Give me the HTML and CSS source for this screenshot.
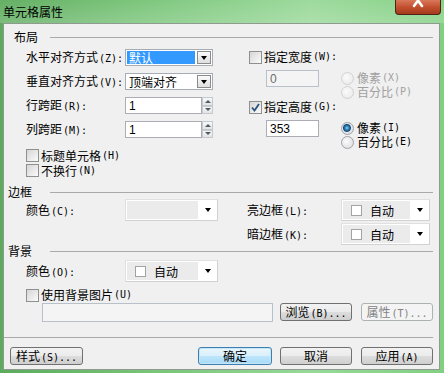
FILE: index.html
```html
<!DOCTYPE html>
<html>
<head>
    <title>单元格属性</title>
    <link rel="stylesheet" href="styles.css">
</head>
<body>
    <div class="window">
        <div class="titlebar">
            <span class="title">单元格属性</span>
            <div class="close-btn">
                <svg width="14" height="8" viewBox="0 0 14 8"><path d="M3 -5 L11 6 M11 -5 L3 6" stroke="#fff" stroke-width="2.6" stroke-linecap="round"/></svg>
            </div>
        </div>

        <div class="dialog">
            <!-- 布局 -->
            <div class="group-head"><span class="group-title indent">布局</span><div class="rule"></div></div>
            <div class="layout">
                <div class="layout-left">
                    <div class="form-grid">
                        <span class="lbl">水平对齐方式<span class="key">(Z):</span></span>
                        <div class="select"><span class="sel-text selected">默认</span><span class="drop-btn"></span></div>

                        <span class="lbl">垂直对齐方式<span class="key">(V):</span></span>
                        <div class="select"><span class="sel-text">顶端对齐</span><span class="drop-btn"></span></div>

                        <span class="lbl">行跨距<span class="key">(R):</span></span>
                        <div class="spin"><input class="field spin-field" type="text" value="1"><span class="spinner"><span class="spin-up"></span><span class="spin-down"></span></span></div>

                        <span class="lbl">列跨距<span class="key">(M):</span></span>
                        <div class="spin"><input class="field spin-field" type="text" value="1"><span class="spinner"><span class="spin-up"></span><span class="spin-down"></span></span></div>
                    </div>
                    <div class="check-list">
                        <div class="check-row"><span class="check"></span>标题单元格<span class="key">(H)</span></div>
                        <div class="check-row"><span class="check"></span>不换行<span class="key">(N)</span></div>
                    </div>
                </div>

                <div class="layout-right">
                    <div class="check-row"><span class="check"></span>指定宽度<span class="key">(W):</span></div>
                    <div class="size-row">
                        <input class="field size-field" type="text" value="0" disabled>
                        <div class="radio-list">
                            <div class="radio-row disabled"><span class="radio"></span>像素<span class="key">(X)</span></div>
                            <div class="radio-row disabled"><span class="radio"></span>百分比<span class="key">(P)</span></div>
                        </div>
                    </div>
                    <div class="check-row"><span class="check checked"><svg width="9" height="9" viewBox="0 0 9 9"><path d="M1 4.5 L3.5 7.5 L8 1" fill="none" stroke="#2c4f7c" stroke-width="1.8"/></svg></span>指定高度<span class="key">(G):</span></div>
                    <div class="size-row">
                        <input class="field size-field" type="text" value="353">
                        <div class="radio-list">
                            <div class="radio-row"><span class="radio on"></span>像素<span class="key">(I)</span></div>
                            <div class="radio-row"><span class="radio"></span>百分比<span class="key">(E)</span></div>
                        </div>
                    </div>
                </div>
            </div>

            <!-- 边框 -->
            <div class="group-head border-head"><span class="group-title">边框</span><div class="rule"></div></div>
            <div class="border-grid">
                <span class="lbl">颜色<span class="key">(C):</span></span>
                <div class="color-select"><span class="swatch-area"></span><span class="arrow"></span></div>
                <span class="lbl lbl-right">亮边框<span class="key">(L):</span></span>
                <div class="color-select"><span class="swatch-area"><span class="swatch"></span>自动</span><span class="arrow"></span></div>

                <span></span><span></span>
                <span class="lbl lbl-right">暗边框<span class="key">(K):</span></span>
                <div class="color-select"><span class="swatch-area"><span class="swatch"></span>自动</span><span class="arrow"></span></div>
            </div>

            <!-- 背景 -->
            <div class="group-head bg-head"><span class="group-title">背景</span><div class="rule"></div></div>
            <div class="bg-grid">
                <span class="lbl">颜色<span class="key">(O):</span></span>
                <div class="color-select"><span class="swatch-area"><span class="swatch"></span>自动</span><span class="arrow"></span></div>
            </div>
            <div class="check-row bg-check"><span class="check"></span>使用背景图片<span class="key">(U)</span></div>
            <div class="file-row">
                <input class="field file-field" type="text" value="" disabled>
                <button class="btn browse-btn">浏览<span class="key">(B)...</span></button>
                <button class="btn prop-btn" disabled>属性<span class="key">(T)...</span></button>
            </div>

            <div class="sep"></div>

            <div class="bottom-row">
                <button class="btn style-btn">样式<span class="key">(S)...</span></button>
                <button class="btn default ok-btn">确定</button>
                <button class="btn cancel-btn">取消</button>
                <button class="btn apply-btn">应用<span class="key">(A)</span></button>
            </div>
        </div>
    </div>
</body>
</html>
```

FILE: styles.css
```css
body {
    margin: 0;
    font-family: "Noto Sans CJK SC", "Liberation Sans", sans-serif;
    font-size: 12px;
    color: #000;
}

.window {
    width: 444px;
    height: 373px;
    overflow: hidden;
    background: linear-gradient(to right, #5cab5c 0%, #79c579 35%, #98d898 70%, #82cf82 100%);
}

.titlebar {
    height: 23px;
    display: flex;
    align-items: flex-start;
    padding-left: 3px;
    background: linear-gradient(to bottom, rgba(255, 255, 255, 0.05), rgba(255, 255, 255, 0.2));
}

.title {
    line-height: 23px;
}

.close-btn {
    margin-left: auto;
    margin-right: 3px;
    width: 46px;
    height: 15px;
    box-sizing: border-box;
    border: 1px solid #4e2214;
    border-top: none;
    border-radius: 0 0 4px 4px;
    background: linear-gradient(to bottom, #d9785a 0%, #c2502f 50%, #a5391c 100%);
    display: flex;
    justify-content: center;
    align-items: flex-start;
}

.dialog {
    margin: 0 4px 0 3px;
    height: 347px;
    box-sizing: border-box;
    border: 1px solid #8f9a90;
    background-color: #f0f0f0;
    padding: 6px 6px 0 4px;
}

/* group headings */
.group-head {
    display: grid;
    grid-template-columns: 42px 1fr;
    align-items: center;
    height: 14px;
    line-height: 14px;
}

.group-title.indent {
    padding-left: 6px;
}

.rule {
    border-top: 1px solid #a9a9a9;
}

.border-head {
    margin-top: 7px;
}

.bg-head {
    margin-top: -1px;
}

.key {
    font-family: "DejaVu Sans Mono", monospace;
    font-size: 10px;
    margin-left: 1px;
}

/* 布局 */
.layout {
    display: flex;
    margin-top: 5px;
}

.layout-left {
    padding-left: 18px;
}

.form-grid {
    display: grid;
    grid-template-columns: 99px 88px;
    grid-auto-rows: 17px;
    row-gap: 7px;
    align-items: center;
}

.lbl {
    line-height: 17px;
    white-space: nowrap;
}

.select {
    height: 17px;
    box-sizing: border-box;
    border: 1px solid #a5acb5;
    background: #fff;
    display: flex;
    padding: 1px;
}

.sel-text {
    flex: 1;
    line-height: 13px;
    padding-left: 2px;
}

.sel-text.selected {
    background-color: #3399ff;
    color: #fff;
}

.drop-btn {
    width: 14px;
    margin-left: 2px;
    box-sizing: border-box;
    border: 1px solid #8b8b8b;
    background: linear-gradient(to bottom, #fbfbfb, #dedede);
    display: flex;
    justify-content: center;
    align-items: center;
}

.drop-btn::after {
    content: "";
    border-left: 3.5px solid transparent;
    border-right: 3.5px solid transparent;
    border-top: 4px solid #000;
}

.field {
    box-sizing: border-box;
    margin: 0;
    height: 17px;
    border: 1px solid #abadb3;
    background: #fff;
    padding: 0 3px;
    font-family: "Liberation Sans", sans-serif;
    font-size: 12px;
    color: #000;
}

.field:disabled {
    background: #f4f4f4;
    border-color: #b8c0ca;
    color: #6d6d6d;
}

.spin {
    display: flex;
    height: 17px;
}

.spin-field {
    width: 77px;
}

.spinner {
    width: 11px;
    display: flex;
    flex-direction: column;
}

.spin-up,
.spin-down {
    flex: 1;
    box-sizing: border-box;
    border: 1px solid #c5c9cf;
    background: linear-gradient(to bottom, #f8f8f8, #e3e3e3);
    display: flex;
    justify-content: center;
    align-items: center;
}

.spin-up::after {
    content: "";
    border-left: 3px solid transparent;
    border-right: 3px solid transparent;
    border-bottom: 3px solid #4e5a68;
}

.spin-down::after {
    content: "";
    border-left: 3px solid transparent;
    border-right: 3px solid transparent;
    border-top: 3px solid #4e5a68;
}

.check-list {
    margin-top: 10px;
}

.check-list .check-row {
    height: 15px;
    line-height: 15px;
}

.check-row {
    display: flex;
    align-items: center;
    height: 14px;
    line-height: 14px;
    white-space: nowrap;
}

.check {
    width: 13px;
    height: 13px;
    box-sizing: border-box;
    border: 1px solid #8e8f8f;
    background: linear-gradient(135deg, #d6d6d6, #fafafa);
    margin-right: 2px;
    display: flex;
    justify-content: center;
    align-items: center;
}

.layout-right {
    margin-left: 36px;
}

.layout-right .check-row {
    margin-top: 1px;
}

.size-row {
    display: flex;
    margin-top: 6px;
}

.size-field {
    margin-left: 17px;
    width: 53px;
}

.radio-list {
    margin-left: 22px;
    padding-top: 1px;
}

.radio-row {
    display: flex;
    align-items: center;
    height: 14px;
    line-height: 14px;
    white-space: nowrap;
}

.radio-row.disabled {
    color: #a0a0a0;
}

.radio {
    width: 13px;
    height: 13px;
    box-sizing: border-box;
    border-radius: 50%;
    border: 1px solid #9ea3a8;
    background: radial-gradient(circle at 40% 40%, #fbfbfb, #d9d9d9);
    margin-right: 3px;
}

.radio-row.disabled .radio {
    border-color: #cfd2d4;
    background: radial-gradient(circle at 40% 40%, #fbfbfb, #e6e6e6);
}

.radio.on {
    background: radial-gradient(circle at 45% 45%, #8fd0f0 0, #2a7fb6 2px, #164d7c 3.5px, #e8e8e8 4.5px, #d4d4d4 100%);
}

/* 边框 / 背景 */
.border-grid,
.bg-grid {
    display: grid;
    padding-left: 18px;
    grid-auto-rows: 22px;
    row-gap: 2px;
    align-items: center;
}

.border-grid {
    grid-template-columns: 99px 93px 123px 89px;
}

.bg-grid {
    grid-template-columns: 99px 93px;
    margin-top: 2px;
}

.lbl-right {
    padding-left: 29px;
}

.color-select {
    height: 22px;
    box-sizing: border-box;
    border: 1px solid #e0e0e0;
    border-right-color: #d2d2d2;
    border-bottom-color: #d2d2d2;
    background: #fff;
    padding: 1px 0 1px 1px;
    display: flex;
}

.swatch-area {
    flex: 1;
    background-color: #ebebeb;
    display: flex;
    align-items: center;
    padding-left: 8px;
    white-space: nowrap;
}

.swatch {
    width: 11px;
    height: 11px;
    box-sizing: border-box;
    border: 1px solid #a3a3a3;
    background: #fff;
    margin-right: 8px;
}

.arrow {
    width: 19px;
    display: flex;
    justify-content: center;
    align-items: center;
}

.arrow::after {
    content: "";
    border-left: 3.5px solid transparent;
    border-right: 3.5px solid transparent;
    border-top: 4px solid #000;
}

.bg-check {
    margin-top: 6px;
    padding-left: 18px;
}

.file-row {
    display: flex;
    margin-top: 1px;
    padding-left: 34px;
}

.file-field {
    width: 231px;
    height: 19px;
}

.btn {
    height: 18px;
    box-sizing: border-box;
    border: 1px solid #707070;
    border-radius: 3px;
    background: linear-gradient(to bottom, #f2f2f2 0%, #ebebeb 50%, #dddddd 51%, #cfcfcf 100%);
    font-family: "Noto Sans CJK SC", "Liberation Sans", sans-serif;
    font-size: 12px;
    line-height: 16px;
    padding: 0;
    color: #000;
    white-space: nowrap;
}

.btn:disabled {
    border-color: #adb2b5;
    background: #f4f4f4;
    color: #838383;
}

.btn.default {
    border-color: #3c7fb1;
    background: linear-gradient(to bottom, #eaf6fd 0%, #d9f0fc 50%, #bee6fd 51%, #a7d9f5 100%);
    box-shadow: inset 0 0 0 1px #c6e6f8;
}

.browse-btn {
    width: 72px;
    margin-left: 7px;
}

.prop-btn {
    width: 72px;
    margin-left: 9px;
}

.sep {
    margin: 15px 0 0 -4px;
    border-top: 1px solid #a9a9a9;
}

.bottom-row {
    display: flex;
    margin-top: 9px;
}

.style-btn {
    width: 73px;
    margin-left: 2px;
}

.ok-btn {
    width: 74px;
    margin-left: auto;
}

.cancel-btn {
    width: 72px;
    margin-left: 8px;
}

.apply-btn {
    width: 72px;
    margin-left: 9px;
}
```
